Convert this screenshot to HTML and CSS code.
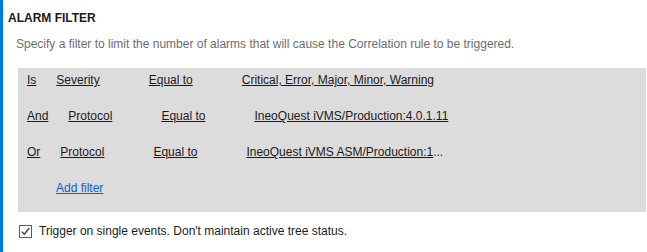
FILE: index.html
```html
<!DOCTYPE html>
<html lang="en">
<head>
    <meta charset="utf-8">
    <link rel="stylesheet" href="styles.css">
    <title>Alarm filter</title>
</head>
<body>
<div class="accent"></div>
<main class="panel">
    <h1>Alarm Filter</h1>
    <p class="hint">Specify a filter to limit the number of alarms that will cause the Correlation rule to be triggered.</p>
    <section class="filters">
        <div class="filterRow">
            <a class="op">Is</a>
            <a class="field">Severity</a>
            <a class="cmp">Equal to</a>
            <a class="val">Critical, Error, Major, Minor, Warning</a>
        </div>
        <div class="filterRow">
            <a class="op">And</a>
            <a class="field">Protocol</a>
            <a class="cmp">Equal to</a>
            <a class="val">IneoQuest iVMS/Production:4.0.1.11</a>
        </div>
        <div class="filterRow">
            <a class="op">Or</a>
            <a class="field">Protocol</a>
            <a class="cmp">Equal to</a>
            <span class="val"><a>IneoQuest iVMS ASM/Production:1</a>...</span>
        </div>
        <div class="addRow">
            <a class="addLink">Add filter</a>
        </div>
    </section>
    <label class="check">
        <span class="box">
            <svg width="11" height="11" viewBox="0 0 11 11"><path d="M1.8 5.6 L4.3 8.2 L9.3 2" fill="none" stroke="#3c3c3c" stroke-width="1.3"/></svg>
        </span>
        Trigger on single events. Don't maintain active tree status.
    </label>
</main>
</body>
</html>
```

FILE: styles.css
```css
/* @formatter:off */
html, body { margin: 0; padding: 0; background: #fff; }
body { display: flex; width: 647px; height: 252px; overflow: hidden; font-family: "Liberation Sans", Arial, sans-serif; font-size: 12px; line-height: 16px; color: #1b1b1b; }
.accent { width: 3px; background: #0078d7; flex: none; }
.panel { flex: 1; padding: 10px 1px 0 5px; }
h1 { margin: 0; font-size: 12px; font-weight: bold; text-transform: uppercase; color: #1b1b1b; }
.hint { margin: 10px 0 0 8px; color: #6d6d6d; }
.filters { margin: 16px 0 0 10px; padding: 4px 9px 16px; background: #dcdcdc; }
.filterRow { display: flex; margin-bottom: 20px; white-space: nowrap; }
.filterRow a, .addLink { text-decoration: underline; cursor: pointer; }
.op { margin-right: 20px; }
.field, .cmp { margin-right: 49px; }
.addRow { padding-left: 29px; }
.addLink { color: #0066cc; }
.check { display: flex; align-items: center; gap: 7px; margin: 11px 0 0 11px; color: #1b1b1b; }
.box { width: 11px; height: 11px; border: 1px solid #5a5a5a; background: #fff; display: flex; }
/* @formatter:on */
```
